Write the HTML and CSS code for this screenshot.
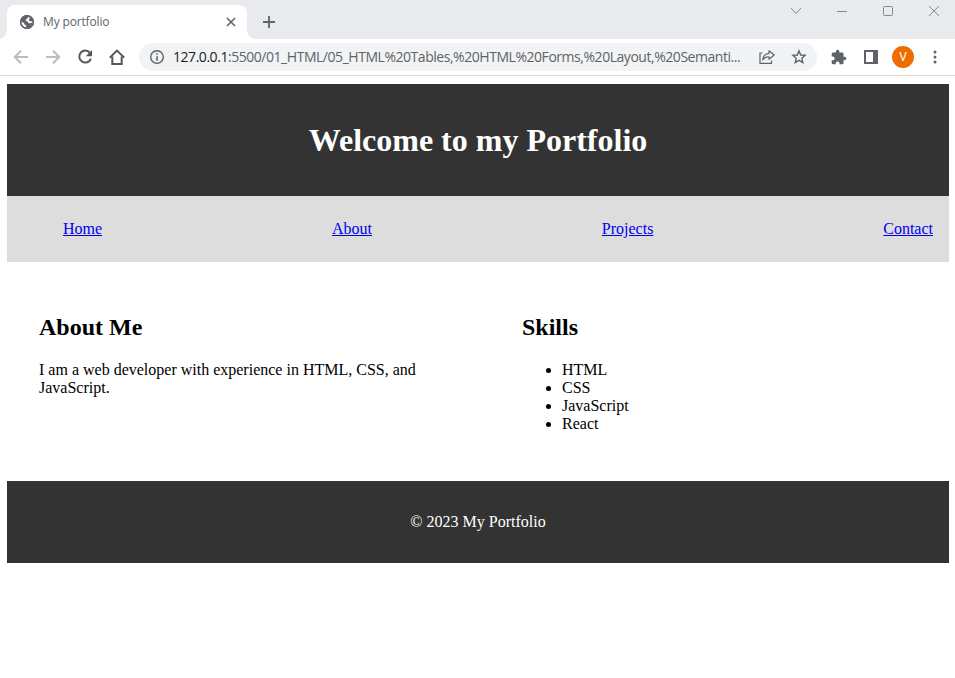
FILE: index.html
```html
<!DOCTYPE html>
<html lang="en">
<head>
<meta charset="utf-8">
<title>My portfolio</title>
<link rel="stylesheet" href="styles.css">
</head>
<body>
<div class="browser">
  <div class="tabstrip">
    <div class="tab">
      <svg class="globe" width="16" height="16" viewBox="0 0 16 16"><circle cx="8" cy="8" r="7" fill="#5f6368"/><path d="M9.500 2 9.200 4 7.500 4.500 7.200 6.200 5.800 7 8.500 7.200 9.300 9 11 9.200 13.600 8.500 12.500 11.500 9.500 13.600 7 13.500 7.300 11.500 5.500 10.500 5 9 2.200 7.600 2.400 9.500 4 12.200 7 13.800 10 13.500 13.500 10 13.800 7.500 11 7.300 9.500 6 10.500 4.800 11 3Z" fill="#fff"/><circle cx="8" cy="8" r="6.3" fill="none" stroke="#5f6368" stroke-width="1.4"/></svg>
      <span class="tab-title">My portfolio</span>
      <svg width="10" height="10" viewBox="0 0 10 10"><path d="M1 1 9 9M9 1 1 9" stroke="#5f6368" stroke-width="1.6"/></svg>
    </div>
    <svg class="plus" width="14" height="14" viewBox="0 0 14 14"><path d="M1 7H13M7 1V13" stroke="#5f6368" stroke-width="1.8"/></svg>
    <div class="controls">
      <svg width="12" height="12" viewBox="0 0 12 12"><path d="M1 3 6 8.5 11 3"/></svg>
      <svg width="12" height="12" viewBox="0 0 12 12"><path d="M1 6.5H11"/></svg>
      <svg width="12" height="12" viewBox="0 0 12 12"><rect x="1.5" y="1.5" width="9" height="9" rx="1"/></svg>
      <svg width="12" height="12" viewBox="0 0 12 12"><path d="M1 1 11 11M11 1 1 11"/></svg>
    </div>
  </div>
  <div class="toolbar">
    <div class="nav-icons">
      <svg width="16" height="16" viewBox="0 0 16 16" class="faded"><path d="M15 8H2M8 1.7 1.8 8 8 14.3"/></svg>
      <svg width="16" height="16" viewBox="0 0 16 16" class="faded"><path d="M1 8H14M8 1.7 14.2 8 8 14.3"/></svg>
      <svg width="16" height="16" viewBox="0 0 16 16"><path d="M13.2 4.2A6 6 0 1 0 13.9 9.6"/><path class="solid" d="M15 1V7.2H8.8Z"/></svg>
      <svg width="16" height="16" viewBox="0 0 16 16"><path d="M0.8 8.6 8 1.6 15.2 8.6M3.3 7.5V15H12.7V7.5"/></svg>
    </div>
    <div class="address">
      <svg width="16" height="16" viewBox="0 0 16 16"><circle cx="8" cy="8" r="6.3" fill="none" stroke="#5f6368" stroke-width="1.4"/><path d="M8 4.2V5.8M8 7.2V11.7" stroke="#5f6368" stroke-width="1.6"/></svg>
      <span class="url"><span class="host">127.0.0.1</span>:5500/01_HTML/05_HTML%20Tables,%20HTML%20Forms,%20Layout,%20Semanti...</span>
      <svg width="16" height="16" viewBox="0 0 16 16" fill="none" stroke="#5f6368" stroke-width="1.2"><path d="M3.500 4H1V14.400H12.500V11.500"/><path d="M10 1.800 15.200 6 10 10.200V7.800C7 7.600 5 8.700 3.700 11 4 7.400 6 4.700 10 4.300Z" stroke-linejoin="round"/></svg>
      <svg class="star" width="16" height="16" viewBox="0 0 16 16"><path d="M8 1.9 9.7 6 14.1 6.4 10.8 9.3 11.8 13.6 8 11.3 4.2 13.6 5.2 9.3 1.9 6.4 6.3 6Z" fill="none" stroke="#5f6368" stroke-width="1.4"/></svg>
    </div>
    <svg class="puzzle" width="16" height="16" viewBox="1 0 23 23"><path fill="#5f6368" d="M20.5 11H19V7a2 2 0 0 0-2-2h-4V3.500a2.500 2.500 0 0 0-5 0V5H4a2 2 0 0 0-2 2v3.800h1.500a2.700 2.700 0 0 1 0 5.400H2V20a2 2 0 0 0 2 2h3.800v-1.500a2.700 2.700 0 0 1 5.400 0V22H17a2 2 0 0 0 2-2v-4h1.500a2.500 2.500 0 0 0 0-5Z"/></svg>
    <svg class="panel" width="14" height="14" viewBox="0 0 14 14"><path fill="#5f6368" fill-rule="evenodd" d="M0 0H14V14H0ZM2 2V12H9V2Z"/></svg>
    <div class="avatar">V</div>
    <svg class="menu" width="4" height="14" viewBox="0 0 4 14" fill="#5f6368"><circle cx="2" cy="2" r="1.5"/><circle cx="2" cy="7" r="1.5"/><circle cx="2" cy="12" r="1.5"/></svg>
  </div>
</div>
<div class="page">
  <header><h1>Welcome to my Portfolio</h1></header>
  <nav>
    <ul>
      <li><a href="#">Home</a></li>
      <li><a href="#">About</a></li>
      <li><a href="#">Projects</a></li>
      <li><a href="#">Contact</a></li>
    </ul>
  </nav>
  <main>
    <section>
      <h2>About Me</h2>
      <p>I am a web developer with experience in HTML, CSS, and JavaScript.</p>
    </section>
    <section>
      <h2>Skills</h2>
      <ul>
        <li>HTML</li>
        <li>CSS</li>
        <li>JavaScript</li>
        <li>React</li>
      </ul>
    </section>
  </main>
  <footer><p>© 2023 My Portfolio</p></footer>
</div>
</body>
</html>
```
FILE: styles.css
```css
* { box-sizing: border-box; }
body {
  margin: 0;
  background: #fff;
  color: #000;
  font: 16px/18px "Liberation Serif", serif;
  overflow: hidden;
}
svg { display: block; flex: none; }

.browser { font-family: "Open Sans", sans-serif; color: #5f6368; }
.tabstrip {
  display: flex;
  height: 39px;
  padding: 5px 15px 0 7px;
  background: #e8eaed;
}
.tab {
  position: relative;
  display: flex;
  align-items: center;
  width: 240px;
  height: 34px;
  padding: 0 11px 0 12px;
  background: #fff;
  border-radius: 8px 8px 0 0;
}
/* Flared feet that join the tab to the toolbar */
.tab::before, .tab::after {
  content: "";
  position: absolute;
  bottom: 0;
  width: 8px;
  height: 8px;
}
.tab::before {
  left: -8px;
  background: radial-gradient(circle at 0 0, #e8eaed 7.5px, #fff 8px);
}
.tab::after {
  right: -8px;
  background: radial-gradient(circle at 100% 0, #e8eaed 7.5px, #fff 8px);
}
.tab-title { flex: 1; margin-left: 8px; font-size: 12px; letter-spacing: -0.15px; }
.plus { margin: 10px 0 0 15px; }
.controls {
  display: flex;
  gap: 34px;
  margin-left: auto;
  fill: none;
  stroke: #85878a;
}
.toolbar {
  display: flex;
  align-items: center;
  height: 37px;
  padding: 0 18px 0 13px;
  border-bottom: 1px solid #dadce0;
}
.nav-icons { display: flex; gap: 16px; fill: none; stroke: #54585d; stroke-width: 2; }
.faded { stroke: #babcbe; }
.solid { fill: #54585d; stroke: none; }
.address {
  display: flex;
  align-items: center;
  width: 678px;
  height: 28px;
  margin-left: 14px;
  padding: 0 10px;
  background: #f1f3f4;
  border-radius: 14px;
}
.url {
  width: 586px;
  margin-left: 8px;
  font-size: 14px;
  white-space: nowrap;
  letter-spacing: -0.46px;
}
.host { color: #202124; }
.star { margin-left: 16px; }
.puzzle { margin-left: 14px; }
.panel { margin-left: 17px; }
.avatar {
  width: 22px;
  height: 22px;
  margin-left: 14px;
  border-radius: 50%;
  background: #ef6c00;
  color: #fff;
  font: 12px/22px Roboto, sans-serif;
  text-align: center;
}
.menu { margin-left: auto; }

.page { width: 942px; margin: 8px 0 0 7px; }
header, footer {
  padding: 16px;
  background: #333;
  color: #fff;
  text-align: center;
}
header { height: 112px; }
h1 { margin: 22px 0 21px; font-size: 32px; line-height: 37px; }
nav { padding: 8px 16px; background: #ddd; }
ul { margin: 16px 0; padding-left: 40px; }
nav ul {
  display: flex;
  justify-content: space-between;
  list-style: none;
}
a { color: #0000ee; }
main {
  display: grid;
  grid-template-columns: 451px 1fr;
  gap: 32px;
  height: 219px;
  padding: 32px;
}
h2 { margin: 20px 0; font-size: 24px; line-height: 27px; }
p { margin: 16px 0; }
main p { width: 420px; }
```
